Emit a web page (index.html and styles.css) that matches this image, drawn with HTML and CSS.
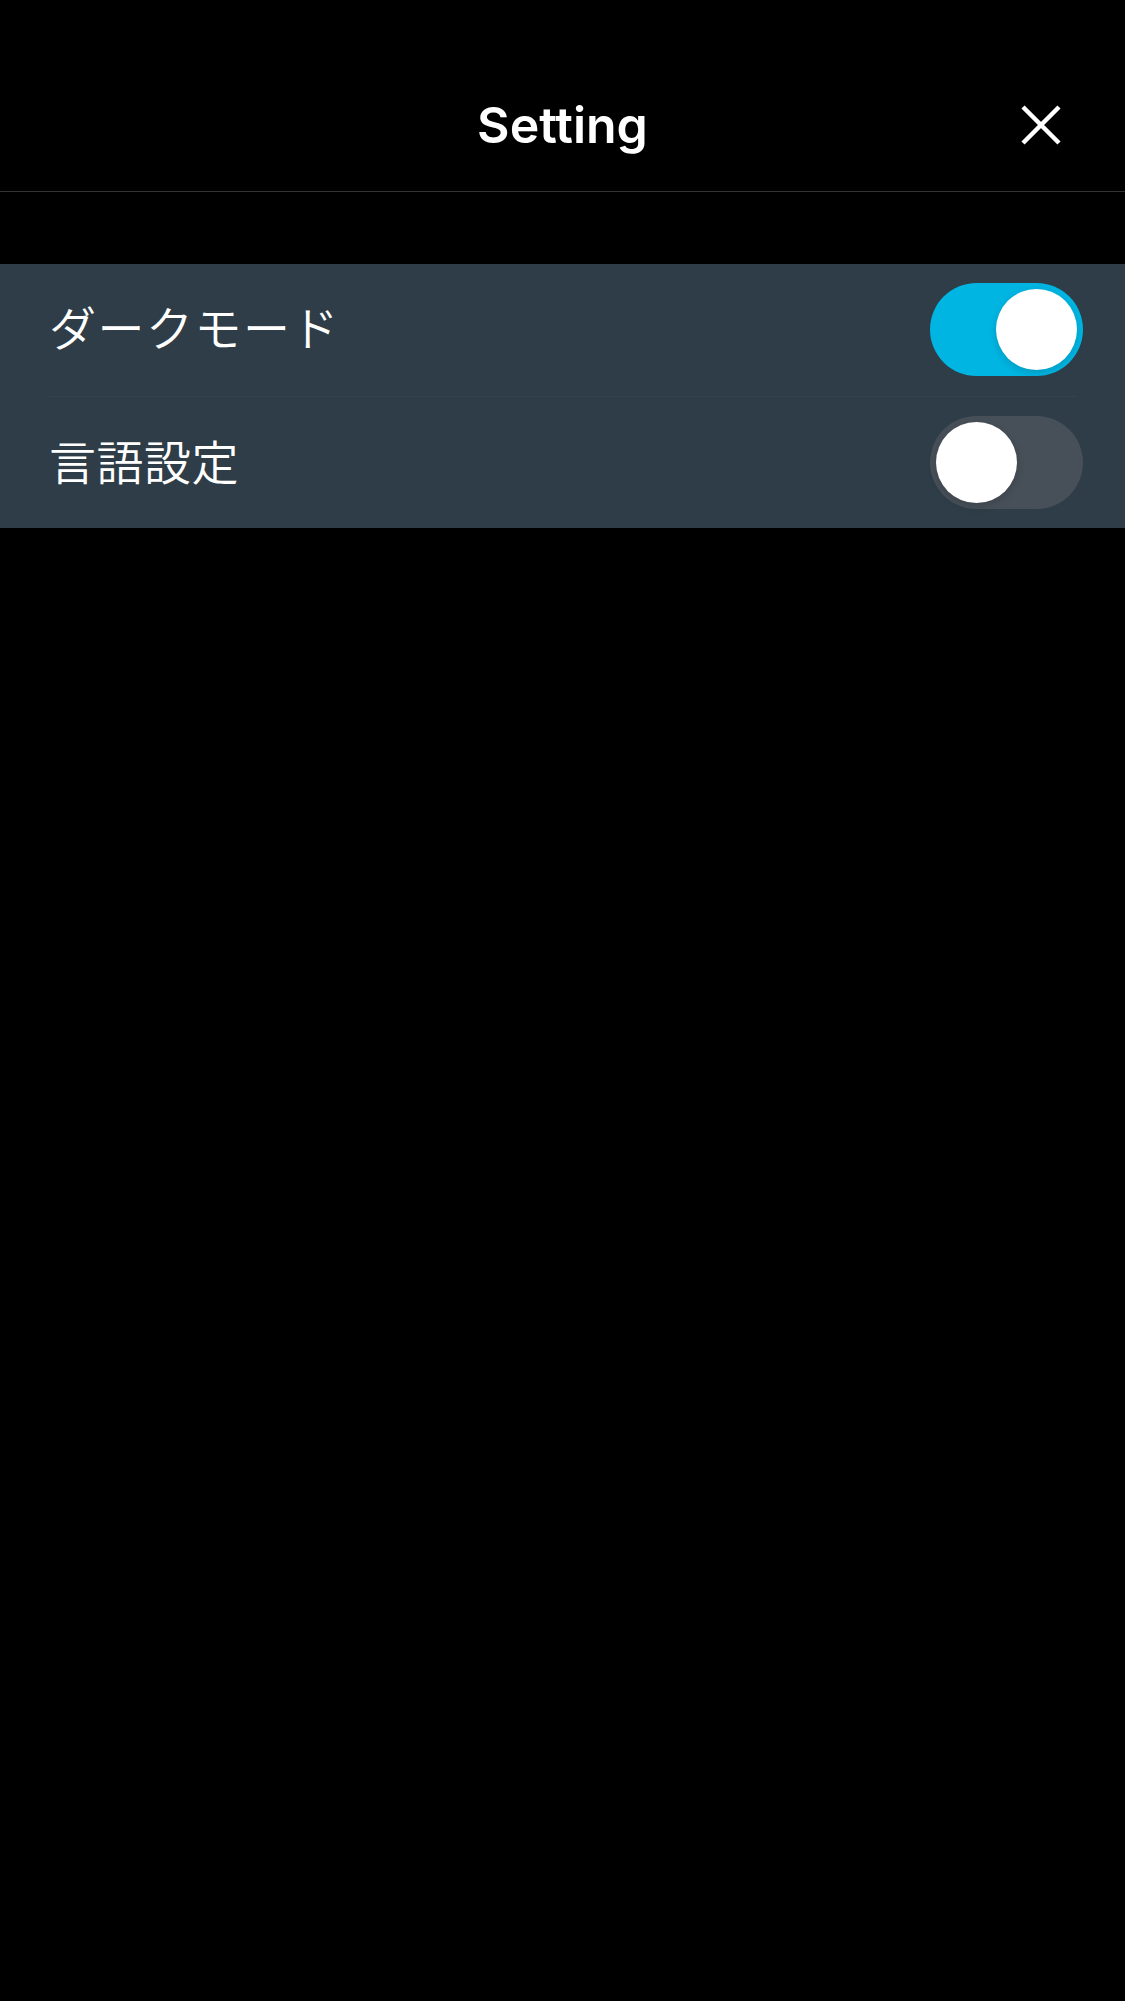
FILE: index.html
```html
<!DOCTYPE html>
<html lang="ja">
<head>
<meta charset="utf-8">
<title>Setting</title>
<link rel="stylesheet" href="styles.css">
</head>
<body>
<div class="app">
  <header class="header">
    <h1 class="title">Setting</h1>
    <button class="close" aria-label="close">
      <svg width="40" height="40" viewBox="0 0 40 40"><path d="M2 2 L38 38 M38 2 L2 38" stroke="#fff" stroke-width="4.5" stroke-linecap="butt"/></svg>
    </button>
  </header>
  <section class="panel">
    <div class="row">
      <span class="label">ダークモード</span>
      <span class="toggle on"><span class="knob"></span></span>
    </div>
    <div class="row">
      <span class="label">言語設定</span>
      <span class="toggle off"><span class="knob"></span></span>
    </div>
  </section>
</div>
</body>
</html>
```
FILE: styles.css
```css
html, body {
  margin: 0;
  padding: 0;
  background: #000;
}
.app {
  width: 1125px;
  min-height: 2001px;
  background: #000;
  color: #fff;
  font-family: "Noto Sans CJK JP", "Noto Sans", sans-serif;
}
.header {
  height: 131px;
  padding-top: 60px;
  border-bottom: 1px solid #333;
  display: flex;
  align-items: center;
  justify-content: center;
  position: relative;
}
.title {
  margin: 0;
  font-family: "Inter", "Roboto", sans-serif;
  font-weight: 600;
  font-size: 50px;
  line-height: 1;
  letter-spacing: 0;
  transform: translateY(-1px);
}
.close {
  position: absolute;
  left: 1021px;
  top: 105px;
  width: 40px;
  height: 40px;
  padding: 0;
  border: 0;
  background: none;
  display: block;
}
.close svg { display: block; }
.panel {
  margin-top: 72px;
  background: #2e3d47;
}
.row {
  height: 132px;
  display: flex;
  align-items: center;
  justify-content: space-between;
  padding: 0 42px 0 49px;
  position: relative;
}
.row + .row::before {
  content: "";
  position: absolute;
  left: 48px;
  right: 48px;
  top: 0;
  height: 1px;
  background: #33434d;
}
.label {
  font-size: 47px;
  font-weight: 350;
  line-height: 1;
  letter-spacing: 1.5px;
}
.row:first-child .label { margin-top: -10px; }
.row:last-child .label { margin-top: -5px; letter-spacing: 0.5px; }
.toggle {
  width: 153px;
  height: 93px;
  border-radius: 47px;
  display: flex;
  align-items: center;
  padding: 0 6px;
  box-sizing: border-box;
}
.row:first-child .toggle { margin-top: -2px; }
.row:last-child .toggle { margin-top: 0; }
.toggle.on {
  background: #00b5e2;
  justify-content: flex-end;
}
.toggle.off {
  background: #474f58;
  justify-content: flex-start;
}
.knob {
  width: 81px;
  height: 81px;
  border-radius: 50%;
  background: #fff;
  box-shadow: 0 3px 8px rgba(0,0,0,0.15);
}
```
